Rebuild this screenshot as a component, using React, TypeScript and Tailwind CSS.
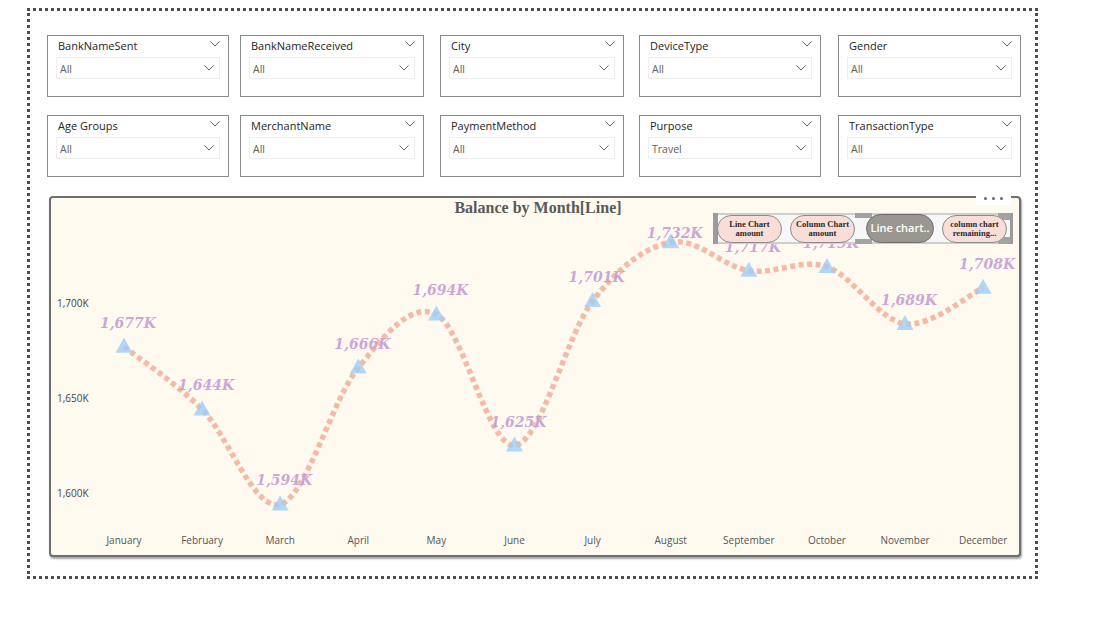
import React from "react";

const ROW1 = [
  { title: "BankNameSent", value: "All" },
  { title: "BankNameReceived", value: "All" },
  { title: "City", value: "All" },
  { title: "DeviceType", value: "All" },
  { title: "Gender", value: "All" },
];

const ROW2 = [
  { title: "Age Groups", value: "All" },
  { title: "MerchantName", value: "All" },
  { title: "PaymentMethod", value: "All" },
  { title: "Purpose", value: "Travel" },
  { title: "TransactionType", value: "All" },
];

// column widths / gaps as measured from the report page
const COLS = [
  "w-[182px]",
  "ml-[11px] w-[184px]",
  "ml-[16px] w-[184px]",
  "ml-[15px] w-[182px]",
  "ml-[17px] w-[183px]",
];

const MONTHS = [
  "January", "February", "March", "April", "May", "June",
  "July", "August", "September", "October", "November", "December",
];
const VALUES = [1677, 1644, 1594, 1666, 1694, 1625, 1701, 1732, 1717, 1719, 1689, 1708];

const xOf = (i: number) => 124 + i * 78.1;
const yOf = (v: number) => 303 + (1700 - v) * 1.9;

function smoothPath(pts: [number, number][]) {
  let d = `M${pts[0][0]},${pts[0][1]}`;
  for (let i = 0; i < pts.length - 1; i++) {
    const p0 = pts[i - 1] || pts[i];
    const p1 = pts[i];
    const p2 = pts[i + 1];
    const p3 = pts[i + 2] || p2;
    const c1x = p1[0] + (p2[0] - p0[0]) / 6;
    const c1y = p1[1] + (p2[1] - p0[1]) / 6;
    const c2x = p2[0] - (p3[0] - p1[0]) / 6;
    const c2y = p2[1] - (p3[1] - p1[1]) / 6;
    d += ` C${c1x},${c1y} ${c2x},${c2y} ${p2[0]},${p2[1]}`;
  }
  return d;
}

function Chevron({ className }: { className?: string }) {
  return (
    <svg width="10" height="6" viewBox="0 0 10 6" className={className}>
      <polyline points="0.5,0.5 5,5 9.5,0.5" fill="none" stroke="#6b6b6b" strokeWidth="1" />
    </svg>
  );
}

function Slicer({ title, value, className }: { title: string; value: string; className: string }) {
  return (
    <div className={`h-[62px] shrink-0 border border-[#8a8a8a] bg-white px-[8px] ${className}`}>
      <div className="flex h-[18px] items-center justify-between pl-[2px]">
        <span className="text-[11px] font-medium leading-none text-[#252423]">{title}</span>
        <Chevron className="-mt-[3px]" />
      </div>
      <div className="mt-[3px] flex h-[22px] items-center justify-between border border-[#eeeeee] pl-[3px] pr-[5px]">
        <span className="pt-[2px] text-[10.5px] leading-none text-[#605e5c]">{value}</span>
        <Chevron />
      </div>
    </div>
  );
}

function PillButton({ top, bottom }: { top: string; bottom: string }) {
  return (
    <div className="relative z-10 flex h-[28px] w-[65px] flex-col items-center justify-center rounded-full border border-[#8c8c8c] bg-[#f8ddd8] font-['Liberation_Serif',serif] text-[8.5px] font-bold leading-[9px] text-[#2a2a2a]">
      <span>{top}</span>
      <span>{bottom}</span>
    </div>
  );
}

function ButtonPanel() {
  return (
    <div className="absolute left-[662px] top-[15px] flex h-[31px] w-[300px] items-center gap-[8px] border-y-2 border-[#cfcfcf] bg-[#f7f7f7] pl-[4px]">
      <div className="absolute -top-[2px] left-0 h-[31px] w-[5px] bg-[#9c9c9c]" />
      <div className="absolute -top-[2px] left-[142px] h-[5px] w-[17px] bg-[#a3a3a3]" />
      <div className="absolute -bottom-[2px] left-[142px] h-[5px] w-[17px] bg-[#a3a3a3]" />
      <div className="absolute -top-[2px] right-0 h-[7px] w-[15px] bg-[#a3a3a3]" />
      <div className="absolute -bottom-[2px] right-0 h-[7px] w-[15px] bg-[#a3a3a3]" />
      <div className="absolute -top-[2px] right-0 h-[31px] w-[3px] bg-[#9c9c9c]" />
      <PillButton top="Line Chart" bottom="amount" />
      <PillButton top="Column Chart" bottom="amount" />
      <div className="relative z-10 ml-[3px] flex h-[29px] w-[68px] items-center justify-center rounded-full border border-[#6e6e6e] bg-[#9a9790] text-[11px] font-semibold text-white">
        Line chart..
      </div>
      <PillButton top="column chart" bottom="remaining..." />
    </div>
  );
}

function LineChart() {
  const pts: [number, number][] = VALUES.map((v, i) => [xOf(i), yOf(v)]);
  return (
    <svg width="968" height="337" viewBox="51 218 968 337" className="block">
      {[
        ["1,700K", 303],
        ["1,650K", 398],
        ["1,600K", 493],
      ].map(([t, y]) => (
        <text key={t as string} x="57" y={(y as number) + 3.5} fontSize="10" fill="#444" fontFamily="Open Sans, sans-serif">
          {t}
        </text>
      ))}
      {MONTHS.map((m, i) => (
        <text key={m} x={xOf(i)} y="544" fontSize="10" fill="#555" textAnchor="middle" fontFamily="Open Sans, sans-serif">
          {m}
        </text>
      ))}
      <path
        d={smoothPath(pts)}
        fill="none"
        stroke="#f3ae96"
        strokeOpacity="0.85"
        strokeWidth="5.5"
        strokeDasharray="5 3.5"
      />
      {pts.map(([x, y], i) => (
        <polygon
          key={i}
          points={`${x},${y - 9} ${x - 8.5},${y + 6} ${x + 8.5},${y + 6}`}
          fill="#9fcdf6"
          fillOpacity="0.8"
        />
      ))}
      {pts.map(([x, y], i) => (
        <text
          key={i}
          x={x + 4}
          y={(i === 7 ? 233 : y - 24) + 5}
          textAnchor="middle"
          fontSize="14"
          fontWeight="bold"
          fontStyle="italic"
          fill="#c49cd4"
          fillOpacity="0.9"
          fontFamily="DejaVu Serif, serif"
        >
          {VALUES[i].toLocaleString("en-US")}K
        </text>
      ))}
    </svg>
  );
}

export default function App() {
  return (
    <div className="min-h-screen bg-white pl-[27px] pt-[8px] font-['Open_Sans',sans-serif]">
      <div className="w-[1011px] border-[3px] border-dotted border-[#4d4d4d] pb-[19px] pl-[17px] pr-[14px] pt-[24px]">
        <div className="flex flex-col gap-[18px]">
          {[ROW1, ROW2].map((row, r) => (
            <div key={r} className="flex">
              {row.map((s, i) => (
                <Slicer key={s.title} title={s.title} value={s.value} className={COLS[i]} />
              ))}
            </div>
          ))}
        </div>
        <div className="relative ml-[2px] mt-[19px] h-[361px] rounded-[4px] border-2 border-[#6e6e6e] bg-[#fffaf0] shadow-[1px_2px_2px_rgba(0,0,0,0.35)]">
          <div className="h-[20px] pl-[6px] text-center font-['Liberation_Serif',serif] text-[16px] font-bold leading-[20px] text-[#595959]">
            Balance by Month[Line]
          </div>
          <LineChart />
          <ButtonPanel />
          <div className="absolute -top-[8px] left-[925px] flex h-[15px] w-[35px] items-center justify-center gap-[5px] bg-white pt-[2px]">
            <span className="h-[3px] w-[3px] rounded-full bg-[#666]" />
            <span className="h-[3px] w-[3px] rounded-full bg-[#666]" />
            <span className="h-[3px] w-[3px] rounded-full bg-[#666]" />
          </div>
        </div>
      </div>
    </div>
  );
}
